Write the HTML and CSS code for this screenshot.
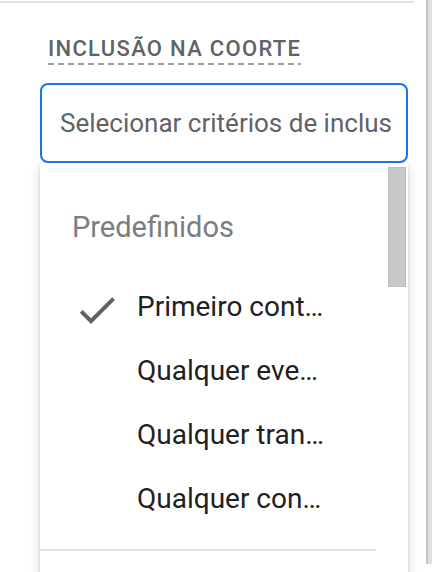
FILE: index.html
```html
<!DOCTYPE html>
<html lang="pt">
<head>
<meta charset="utf-8">
<link rel="stylesheet" href="styles.css">
</head>
<body>
<div class="page">
  <div class="main">
    <div class="topline"></div>
    <div class="section">
      <div class="heading"><span class="heading-text">INCLUSÃO NA COORTE</span></div>
      <div class="input"><div class="input-text">Selecionar critérios de inclus</div></div>
      <div class="menu">
        <div class="thumb"></div>
        <div class="menu-header">Predefinidos</div>
        <div class="item">
          <svg class="check" viewBox="0 0 24 24" width="48" height="48"><path d="M9 16.17L4.83 12l-1.42 1.41L9 19 21 7l-1.41-1.41z" fill="#5f6368"/></svg>
          <span class="item-text">Primeiro cont…</span>
        </div>
        <div class="item"><span class="icon-space"></span><span class="item-text">Qualquer eve…</span></div>
        <div class="item"><span class="icon-space"></span><span class="item-text">Qualquer tran…</span></div>
        <div class="item"><span class="icon-space"></span><span class="item-text">Qualquer con…</span></div>
        <div class="divider"></div>
      </div>
    </div>
  </div>
  <div class="rail"></div>
</div>
</body>
</html>
```

FILE: styles.css
```css
html, body {
  margin: 0;
  padding: 0;
  background: #ffffff;
}
body {
  font-family: Roboto, "Liberation Sans", Arial, sans-serif;
  height: 572px;
  overflow: hidden;
}
.page {
  display: flex;
  width: 432px;
  height: 572px;
}
.main {
  width: 426px;
  flex: none;
}
.topline {
  margin-top: 1px;
  height: 2px;
  width: 414px;
  background: #e3e3e3;
}
.section {
  padding: 34px 18px 0 40px;
}
.heading {
  padding-left: 8px;
  height: 28px;
}
.heading-text {
  display: inline-block;
  font-size: 22px;
  font-weight: 500;
  line-height: 24px;
  letter-spacing: 1.3px;
  color: #5f6368;
  padding-bottom: 4px;
  background-image: linear-gradient(to right, #9aa0a6 60%, transparent 60%);
  background-size: 10px 2px;
  background-repeat: repeat-x;
  background-position: left bottom;
}
.input {
  margin-top: 18px;
  height: 80px;
  box-sizing: border-box;
  border: 2px solid #1a73e8;
  border-radius: 8px;
  padding: 0 12px 0 18px;
  background: #ffffff;
  position: relative;
  z-index: 2;
}
.input-text {
  font-size: 26px;
  line-height: 76px;
  color: #5f6368;
  white-space: nowrap;
}
.menu {
  position: relative;
  height: 420px;
  background: #ffffff;
  box-shadow: 0 4px 10px rgba(0,0,0,0.16), 0 0 3px rgba(0,0,0,0.10);
  padding-top: 32px;
  box-sizing: border-box;
}
.thumb {
  position: absolute;
  top: 4px;
  right: 2px;
  width: 18px;
  height: 120px;
  box-sizing: border-box;
  background: #c8c8c8;
  border: 1px solid #bdbdbd;
}
.menu-header {
  height: 64px;
  line-height: 64px;
  padding-left: 32px;
  font-size: 29px;
  color: #7a7e82;
  margin-bottom: 16px;
}
.item {
  display: flex;
  align-items: center;
  height: 64px;
  padding-left: 33px;
  gap: 16px;
}
.check {
  flex: none;
  margin-top: 5px;
}
.icon-space {
  width: 48px;
  flex: none;
}
.item-text {
  font-size: 28px;
  line-height: 64px;
  color: #202124;
  white-space: nowrap;
}
.divider {
  margin-top: 18px;
  height: 2px;
  width: 336px;
  background: #e3e3e3;
}
.rail {
  width: 6px;
  height: 564px;
  flex: none;
  box-sizing: border-box;
  border-left: 2px solid #c4c4c4;
  background: #e0e0e0;
}
```
